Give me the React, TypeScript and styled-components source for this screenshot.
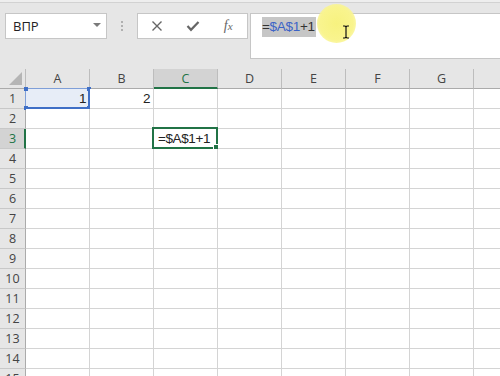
import styled, { createGlobalStyle } from 'styled-components';

const GlobalStyle = createGlobalStyle`
  html, body {
    margin: 0;
    padding: 0;
    background: #ffffff;
    overflow: hidden;
  }
  body {
    font-family: 'Open Sans', 'Noto Sans', sans-serif;
  }
`;

const COLUMNS = ['A', 'B', 'C', 'D', 'E', 'F', 'G', 'H'];
const ROWS = Array.from({ length: 15 }, (_, i) => i + 1);

const CELLS: Record<string, string> = {
  A1: '1',
  B1: '2',
  C3: '=$A$1+1',
};

const ACTIVE = 'C3';
const REFERENCE = 'A1';

const App = () => {
  return (
    <Page>
      <GlobalStyle />
      <Toolbar>
        <TopStrip />
        <BarRow>
          <NameBox>
            <NameText>ВПР</NameText>
            <DropArrow />
          </NameBox>
          <Grip>
            <span />
            <span />
            <span />
          </Grip>
          <ButtonBox>
            <IconButton>
              <svg width="12" height="12" viewBox="0 0 12 12">
                <path d="M1.5 1.5 L10.5 10.5 M10.5 1.5 L1.5 10.5" stroke="#666" strokeWidth="1.4" fill="none" />
              </svg>
            </IconButton>
            <IconButton>
              <svg width="14" height="12" viewBox="0 0 14 12">
                <path d="M1.5 6 L5 9.8 L12.5 2" stroke="#666" strokeWidth="2.2" fill="none" strokeLinejoin="miter" />
              </svg>
            </IconButton>
            <IconButton>
              <FxText>
                f<small>x</small>
              </FxText>
            </IconButton>
          </ButtonBox>
          <FormulaBar>
            <FormulaText>
              <Dark>=</Dark>
              <Ref>$A$1</Ref>
              <Dark>+1</Dark>
            </FormulaText>
            <Spotlight />
            <Caret>
              <svg width="8" height="14" viewBox="0 0 8 14">
                <path d="M1 1 H3 L4 2 L5 1 H7 M4 2 V12 M1 13 H3 L4 12 L5 13 H7" stroke="#111" strokeWidth="1.2" fill="none" />
              </svg>
            </Caret>
          </FormulaBar>
        </BarRow>
      </Toolbar>
      <Sheet>
        <Corner>
          <CornerTriangle />
        </Corner>
        {COLUMNS.map((c) => (
          <ColHeader key={c} $selected={c === ACTIVE[0]}>
            {c}
          </ColHeader>
        ))}
        {ROWS.map((r) => (
          <Row key={r} r={r} />
        ))}
      </Sheet>
    </Page>
  );
};

const Row = ({ r }: { r: number }) => (
  <>
    <RowHeader $selected={String(r) === ACTIVE.slice(1)}>{r}</RowHeader>
    {COLUMNS.map((c) => {
      const id = `${c}${r}`;
      const value = CELLS[id];
      const isFormula = value?.startsWith('=');
      return (
        <Cell key={id} $reference={id === REFERENCE}>
          {value && <CellValue $left={isFormula}>{value}</CellValue>}
          {id === REFERENCE && (
            <RefFrame>
              <Handle $pos="tl" />
              <Handle $pos="tr" />
              <Handle $pos="bl" />
              <Handle $pos="br" />
            </RefFrame>
          )}
          {id === ACTIVE && (
            <ActiveFrame>
              <FillHandle />
            </ActiveFrame>
          )}
        </Cell>
      );
    })}
  </>
);

const Page = styled.div`
  width: 500px;
  height: 376px;
  overflow: hidden;
  display: flex;
  flex-direction: column;
`;

const Toolbar = styled.div`
  height: 69px;
  flex-shrink: 0;
  background: #e6e6e6;
  display: flex;
  flex-direction: column;
`;

const TopStrip = styled.div`
  height: 2px;
  background: #eeeeee;
  border-bottom: 1px solid #d2d2d2;
`;

const BarRow = styled.div`
  display: flex;
  align-items: flex-start;
  padding: 10px 0 0 5px;
`;

const NameBox = styled.div`
  width: 102px;
  height: 26px;
  box-sizing: border-box;
  background: #ffffff;
  border: 1px solid #c6c6c6;
  display: flex;
  align-items: center;
  justify-content: space-between;
  padding: 0 5px 0 7px;
`;

const NameText = styled.span`
  font-size: 13px;
  color: #222;
`;

const DropArrow = styled.span`
  width: 0;
  height: 0;
  border-left: 4px solid transparent;
  border-right: 4px solid transparent;
  border-top: 4px solid #7a7a7a;
  margin-bottom: 2px;
`;

const Grip = styled.div`
  width: 30px;
  height: 26px;
  display: flex;
  flex-direction: column;
  align-items: center;
  justify-content: center;
  gap: 2px;

  span {
    width: 2px;
    height: 2px;
    background: #b0b0b0;
  }
`;

const ButtonBox = styled.div`
  width: 111px;
  height: 26px;
  box-sizing: border-box;
  background: #ffffff;
  border: 1px solid #c6c6c6;
  display: flex;
  align-items: center;
  padding: 0 1px 0 1px;
  margin-right: 2px;
`;

const IconButton = styled.div`
  flex: 1;
  display: flex;
  align-items: center;
  justify-content: center;
`;

const FxText = styled.span`
  font-family: 'Liberation Serif', serif;
  font-style: italic;
  font-size: 14px;
  color: #666;

  small {
    font-size: 11px;
  }
`;

const FormulaBar = styled.div`
  position: relative;
  flex: 1;
  height: 46px;
  box-sizing: border-box;
  background: #ffffff;
  border: 1px solid #c6c6c6;
  border-right: none;
  padding: 0 0 0 11px;
`;

const FormulaText = styled.span`
  display: inline-block;
  background: #c6c6c6;
  font-family: 'Liberation Sans', Arial, sans-serif;
  font-size: 13.5px;
  line-height: 20px;
  letter-spacing: -0.3px;
  padding-right: 1px;
`;

const Dark = styled.span`
  color: #333;
`;

const Ref = styled.span`
  color: #3b63c6;
`;

const Spotlight = styled.div`
  position: absolute;
  left: 66px;
  top: -10px;
  width: 39px;
  height: 39px;
  border-radius: 50%;
  background: radial-gradient(circle, #f7f27f 0%, #f9f48e 60%, rgba(250, 246, 150, 0.6) 85%, rgba(250, 246, 150, 0) 100%);
`;

const Caret = styled.div`
  position: absolute;
  left: 91px;
  top: 11px;
  line-height: 0;
`;

const Sheet = styled.div`
  display: grid;
  grid-template-columns: 26px repeat(8, 64px);
  grid-auto-rows: 20px;
  font-family: 'Open Sans', 'Noto Sans', sans-serif;
`;

const Corner = styled.div`
  position: relative;
  background: #e6e6e6;
  border-right: 1px solid #bdbdbd;
  border-bottom: 1px solid #ababab;
`;

const CornerTriangle = styled.div`
  position: absolute;
  right: 3px;
  bottom: 3px;
  width: 0;
  height: 0;
  border-left: 13px solid transparent;
  border-bottom: 13px solid #b5b5b5;
`;

const ColHeader = styled.div<{ $selected?: boolean }>`
  box-sizing: border-box;
  background: ${({ $selected }) => ($selected ? '#d3d3d3' : '#e6e6e6')};
  color: ${({ $selected }) => ($selected ? '#217346' : '#444')};
  border-right: 1px solid #bdbdbd;
  border-bottom: ${({ $selected }) => ($selected ? '2px solid #217346' : '1px solid #ababab')};
  font-size: 12.5px;
  display: flex;
  align-items: center;
  justify-content: center;
  padding-top: ${({ $selected }) => ($selected ? '1px' : '0')};
`;

const RowHeader = styled.div<{ $selected?: boolean }>`
  box-sizing: border-box;
  background: ${({ $selected }) => ($selected ? '#d3d3d3' : '#e6e6e6')};
  color: ${({ $selected }) => ($selected ? '#217346' : '#444')};
  border-right: ${({ $selected }) => ($selected ? '2px solid #217346' : '1px solid #ababab')};
  border-bottom: 1px solid #c8c8c8;
  font-size: 12.5px;
  display: flex;
  align-items: center;
  justify-content: center;
  padding-left: ${({ $selected }) => ($selected ? '1px' : '0')};
`;

const Cell = styled.div<{ $reference?: boolean }>`
  position: relative;
  box-sizing: border-box;
  background: ${({ $reference }) => ($reference ? '#e7edf7' : '#ffffff')};
  border-right: 1px solid #d4d4d4;
  border-bottom: 1px solid #d4d4d4;
`;

const CellValue = styled.div<{ $left?: boolean }>`
  height: 100%;
  display: flex;
  align-items: center;
  justify-content: ${({ $left }) => ($left ? 'flex-start' : 'flex-end')};
  padding: ${({ $left }) => ($left ? '0 0 0 4px' : '0 3px 0 0')};
  font-family: 'Liberation Sans', Arial, sans-serif;
  font-size: 13.5px;
  letter-spacing: -0.4px;
  color: #222;
  white-space: nowrap;
`;

const RefFrame = styled.div`
  position: absolute;
  left: -1px;
  top: -1px;
  right: -1px;
  bottom: -1px;
  border: 1px solid #7f9fd8;
  border-right: 2px solid #3f6fc6;
  border-bottom: 2px solid #3f6fc6;
`;

const HANDLE_POS: Record<string, string> = {
  tl: 'left: -2px; top: -2px;',
  tr: 'right: -3px; top: -2px;',
  bl: 'left: -2px; bottom: -3px;',
  br: 'right: -3px; bottom: -3px;',
};

const Handle = styled.span<{ $pos: string }>`
  position: absolute;
  width: 4px;
  height: 4px;
  background: #3f6fc6;
  ${({ $pos }) => HANDLE_POS[$pos]}
`;

const ActiveFrame = styled.div`
  position: absolute;
  left: -2px;
  top: -2px;
  right: -1px;
  bottom: -1px;
  border: 2px solid #217346;
`;

const FillHandle = styled.span`
  position: absolute;
  right: -4px;
  bottom: -4px;
  width: 5px;
  height: 5px;
  background: #217346;
  border: 1px solid #ffffff;
`;

export default App;
